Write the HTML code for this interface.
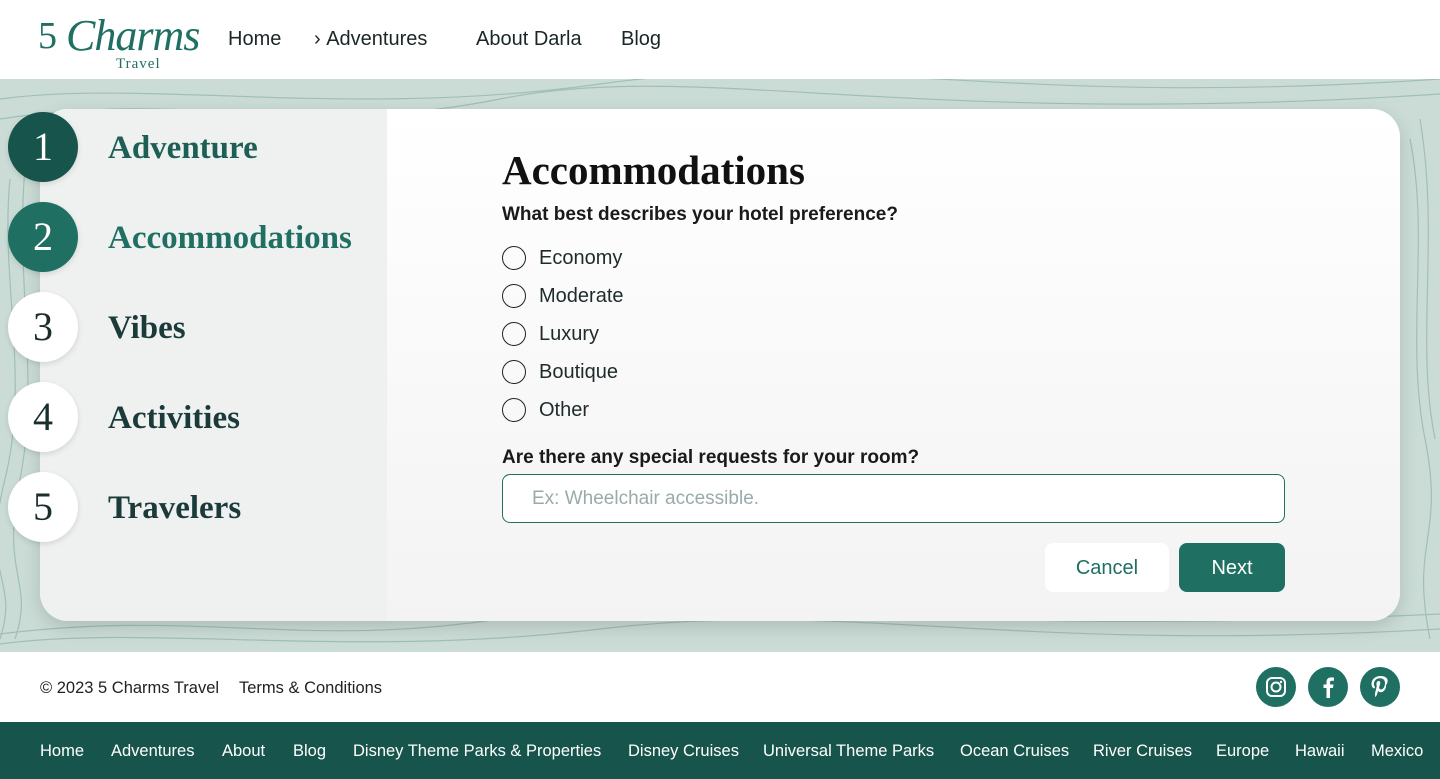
<!DOCTYPE html>
<html><head><meta charset="utf-8"><style>
*{margin:0;padding:0;box-sizing:border-box}
body{width:1440px;height:779px;overflow:hidden;font-family:"Liberation Sans",sans-serif;background:#fff;position:relative;color:#1d2a2a}
.hdr{position:absolute;top:0;left:0;width:1440px;height:79px;background:#fff}
.nav{position:absolute;top:28px;font-size:20px;color:#1b2626}
.bg{position:absolute;top:79px;left:0;width:1440px;height:573px;background:#cbdcd6;overflow:hidden}
.card{position:absolute;left:40px;top:109px;width:1360px;height:512px;border-radius:28px;overflow:hidden;box-shadow:0 6px 18px rgba(0,0,0,.15);background:linear-gradient(#fff,#f3f3f3)}
.left{position:absolute;left:0;top:0;width:347px;height:512px;background:#eff1f1}
.circ{position:absolute;left:8px;width:70px;height:70px;border-radius:50%;font-family:"Liberation Serif",serif;font-size:40px;text-align:center;line-height:70px;box-shadow:0 2px 6px rgba(0,0,0,.12)}
.step{position:absolute;left:108px;font-family:"Liberation Serif",serif;font-weight:bold;font-size:33px;color:#1b3a3a}
.radio{position:absolute;left:502px;font-size:20px;color:#1f2b2b}
.radio i{position:absolute;left:0;top:0;width:24px;height:24px;border:1.5px solid #222;border-radius:50%}
.radio span{position:absolute;left:37px;top:1px;white-space:nowrap}
.ft{position:absolute;top:722px;left:0;width:1440px;height:57px;background:#17554c;color:#fff;font-size:16.5px}
.ft span{position:absolute;top:20px;white-space:nowrap}
.soc{position:absolute;top:667px;width:40px;height:40px;border-radius:50%;background:#1f6f63}
</style></head><body>
<div class="hdr">
 <div style="position:absolute;left:38px;top:14px;font-family:'Liberation Serif',serif;font-size:38px;color:#1f6f63">5</div>
 <div style="position:absolute;left:66px;top:10px;font-family:'Liberation Serif',serif;font-style:italic;font-size:44px;color:#1f6f63;letter-spacing:-1px">Charms</div>
 <div style="position:absolute;left:116px;top:56px;font-family:'Liberation Serif',serif;font-size:15px;color:#1f6f63;letter-spacing:1px">Travel</div>
 <div class="nav" style="left:228px">Home</div>
 <div class="nav" style="left:314px">›&nbsp;Adventures</div>
 <div class="nav" style="left:476px">About Darla</div>
 <div class="nav" style="left:621px">Blog</div>
</div>
<div class="bg">
<svg width="1440" height="573" style="position:absolute;left:0;top:0" fill="none" stroke="#8fb3a8" stroke-width="1.2" opacity=".7">
<path d="M0 40 C200 10 300 60 500 20 S900 50 1440 15"/><path d="M0 20 C150 0 350 40 600 5 S1000 30 1440 0"/>
<path d="M0 555 C200 530 300 570 500 540 S900 560 1440 535"/><path d="M0 565 C150 545 350 580 600 550 S1000 575 1440 550"/>
<path d="M10 100 C0 200 30 300 5 400 S20 500 0 560"/><path d="M25 90 C15 200 40 300 20 400 S35 500 15 560"/>
<path d="M1410 60 C1430 160 1405 260 1425 360 S1410 460 1430 560"/><path d="M1420 40 C1440 160 1415 260 1435 360"/>
</svg>
<div class="card" style="top:30px">
 <div class="left"></div>
 <div style="position:absolute;left:462px;top:37px;font-family:'Liberation Serif',serif;font-weight:bold;font-size:41px;color:#111">Accommodations</div>
 <div style="position:absolute;left:462px;top:95px;font-size:19px;font-weight:bold;color:#1a1a1a">What best describes your hotel preference?</div>
 <div style="position:absolute;left:462px;top:338px;font-size:19px;font-weight:bold;color:#1a1a1a">Are there any special requests for your room?</div>
 <div style="position:absolute;left:462px;top:365px;width:783px;height:49px;border:1.5px solid #1f6f63;border-radius:8px;background:#fff;font-size:19px;color:#9aa;padding:13px 29px">Ex: Wheelchair accessible.</div>
 <div style="position:absolute;left:1005px;top:434px;width:124px;height:49px;border-radius:8px;background:#fff;color:#1f6f63;font-size:20px;text-align:center;line-height:51px">Cancel</div>
 <div style="position:absolute;left:1139px;top:434px;width:106px;height:49px;border-radius:8px;background:#1f6f63;color:#fff;font-size:20px;text-align:center;line-height:51px">Next</div>
</div>
</div>
<div class="radio" style="top:246px"><i></i><span>Economy</span></div>
<div class="radio" style="top:284px"><i></i><span>Moderate</span></div>
<div class="radio" style="top:322px"><i></i><span>Luxury</span></div>
<div class="radio" style="top:360px"><i></i><span>Boutique</span></div>
<div class="radio" style="top:398px"><i></i><span>Other</span></div>
<div class="circ" style="top:112px;background:#17554c;color:#fff">1</div>
<div class="circ" style="top:202px;background:#1f6f63;color:#fff">2</div>
<div class="circ" style="top:292px;background:#fff;color:#1b2e2e">3</div>
<div class="circ" style="top:382px;background:#fff;color:#1b2e2e">4</div>
<div class="circ" style="top:472px;background:#fff;color:#1b2e2e">5</div>
<div class="step" style="top:130px;color:#1d5f55">Adventure</div>
<div class="step" style="top:220px;color:#1f6f63">Accommodations</div>
<div class="step" style="top:310px">Vibes</div>
<div class="step" style="top:400px">Activities</div>
<div class="step" style="top:490px">Travelers</div>
<div style="position:absolute;left:40px;top:679px;font-size:16.5px;color:#222">© 2023 5 Charms Travel</div>
<div style="position:absolute;left:239px;top:679px;font-size:16.5px;color:#222">Terms &amp; Conditions</div>
<div class="soc" style="left:1256px"><svg width="40" height="40"><rect x="11" y="11" width="18" height="18" rx="5" fill="none" stroke="#fff" stroke-width="2"/><circle cx="20" cy="20" r="4.5" fill="none" stroke="#fff" stroke-width="2"/><circle cx="25" cy="15" r="1.2" fill="#fff"/></svg></div>
<div class="soc" style="left:1308px"><svg width="40" height="40"><path d="M22 31V21h3l.5-3.5H22v-2c0-1 .4-1.7 1.8-1.7H26v-3.2c-.5 0-1.6-.2-2.9-.2-2.8 0-4.6 1.7-4.6 4.8v2.3h-3V21h3v10z" fill="#fff"/></svg></div>
<div class="soc" style="left:1360px"><svg width="40" height="40"><path d="M20.5 9c-6 0-9 4.2-9 7.7 0 2.1.8 4 2.5 4.7.3.1.5 0 .6-.3l.3-1c.1-.3 0-.4-.2-.7-.5-.6-.8-1.3-.8-2.4 0-3.1 2.3-5.8 6-5.8 3.3 0 5.1 2 5.1 4.7 0 3.5-1.6 6.5-3.9 6.5-1.3 0-2.2-1-1.9-2.3.4-1.5 1.1-3.2 1.1-4.3 0-1-.5-1.8-1.6-1.8-1.3 0-2.3 1.3-2.3 3.1 0 1.1.4 1.9.4 1.9l-1.6 6.6c-.4 1.6-.1 3.6 0 4.2l.3.1c.3-.4 1.4-1.7 1.8-3.3l.7-2.7c.4.7 1.4 1.3 2.5 1.3 3.3 0 5.6-3 5.6-7.1C30 12.4 26.200 9 20.5 9z" fill="#fff"/></svg></div>
<div class="ft">
 <span style="left:40px">Home</span><span style="left:111px">Adventures</span><span style="left:222px">About</span><span style="left:293px">Blog</span><span style="left:353px">Disney Theme Parks &amp; Properties</span><span style="left:628px">Disney Cruises</span><span style="left:763px">Universal Theme Parks</span><span style="left:960px">Ocean Cruises</span><span style="left:1093px">River Cruises</span><span style="left:1216px">Europe</span><span style="left:1295px">Hawaii</span><span style="left:1371px">Mexico</span>
</div>
</body></html>
